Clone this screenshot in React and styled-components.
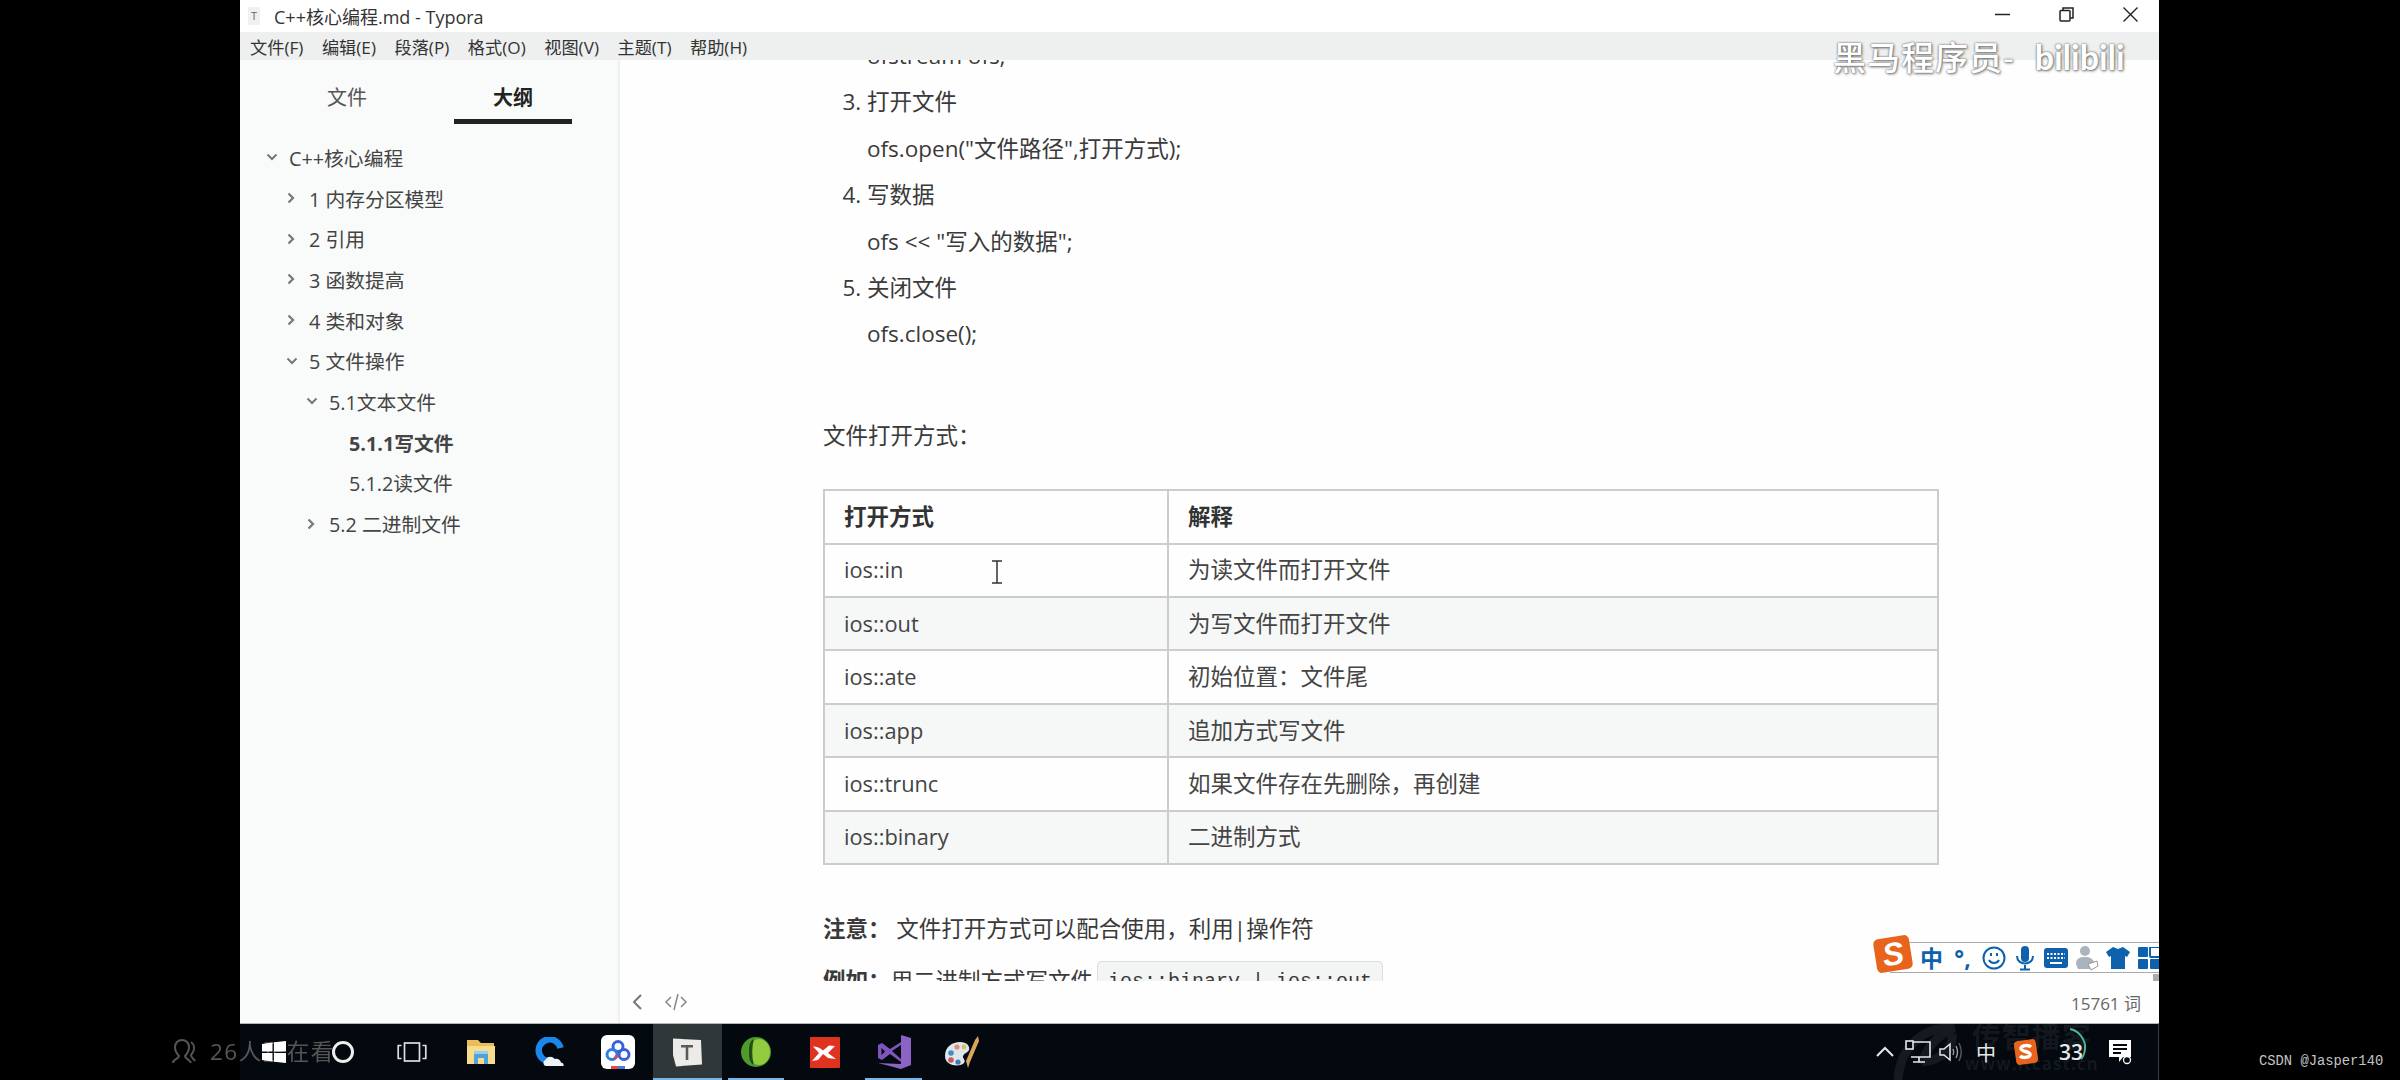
import React from 'react';
import styled, { createGlobalStyle } from 'styled-components';

const GlobalStyle = createGlobalStyle`
  html, body { margin: 0; padding: 0; background: #000; }
  body { font-family: "Open Sans", "Noto Sans CJK SC", sans-serif; color: #333; }
`;

const Page = styled.div`
  position: relative;
  width: 2400px;
  height: 1080px;
  overflow: hidden;
  background: #000;
  padding-left: 240px;
  box-sizing: border-box;
`;

const Window = styled.div`
  position: relative;
  width: 1919px;
  height: 1080px;
  display: flex;
  flex-direction: column;
  background: #fff;
  filter: blur(0.45px);
`;

/* title + menu */
const TitleBar = styled.div`
  height: 32px;
  flex: none;
  display: flex;
  align-items: center;
  padding-left: 8px;
  background: #fff;
`;

const AppGlyph = styled.span`
  width: 12px;
  height: 18px;
  background: #f0f0ee;
  color: #666;
  font-size: 11px;
  line-height: 18px;
  text-align: center;
  margin-right: 14px;
`;

const TitleText = styled.span`
  font-size: 18px;
  color: #333;
`;

const WinButtons = styled.div`
  margin-left: auto;
  display: flex;
  align-items: center;
  gap: 49px;
  padding: 0 21px 4px 0;
  color: #222;
`;

const MenuBar = styled.div`
  height: 28px;
  flex: none;
  display: flex;
  align-items: center;
  gap: 18.5px;
  padding-left: 10px;
  background: #eeefef;
  font-size: 17.2px;
  color: #333;
`;

/* main area */
const Body = styled.div`
  flex: 1;
  min-height: 0;
  display: flex;
`;

const Sidebar = styled.aside`
  width: 380px;
  flex: none;
  background: #f9fafa;
  border-right: 2px solid #f0f0f0;
  box-sizing: border-box;
`;

const Tabs = styled.div`
  display: flex;
  gap: 48px;
  padding-left: 48px;
  height: 64px;
`;

const Tab = styled.div`
  width: 118px;
  height: 64px;
  box-sizing: border-box;
  padding-top: 23px;
  text-align: center;
  font-size: 20px;
  line-height: 30px;
  font-weight: ${p => (p.$active ? 700 : 400)};
  color: ${p => (p.$active ? '#222' : '#555')};
  border-bottom: 5px solid ${p => (p.$active ? '#222' : 'transparent')};
`;

const Outline = styled.div`
  padding-top: 13px;
`;

const OutlineRow = styled.div`
  height: 40.7px;
  display: flex;
  align-items: center;
  padding-left: ${p => 26 + p.$level * 20}px;
  font-size: 19.8px;
  color: #444;
  font-weight: ${p => (p.$bold ? 700 : 400)};
  white-space: pre;
`;

const Arrow = styled.span`
  width: 23px;
  display: flex;
  color: #777;
`;

const Main = styled.main`
  flex: 1;
  min-width: 0;
  display: flex;
  flex-direction: column;
  background: #fefefe;
`;

const Scroller = styled.div`
  flex: 1;
  min-height: 0;
  overflow: hidden;
`;

const Article = styled.article`
  margin-top: -27px;
  padding-left: 203px;
  font-size: 22.5px;
  line-height: 46.4px;
  color: #3a3a3a;
`;

const CodeLine = styled.div`
  padding-left: 44px;
`;

const Steps = styled.ol`
  margin: 0;
  padding-left: 44px;
`;

const Para = styled.p`
  margin: ${p => p.$top}px 0 0;
`;

const Table = styled.table`
  width: 1116px;
  margin-top: 30px;
  border-collapse: collapse;
  table-layout: fixed;
  line-height: 30px;
`;

const Row = styled.tr`
  height: 53.4px;
  background: ${p => (p.$alt ? '#f6f7f7' : '#fefefe')};
`;

const HeadCell = styled.th`
  box-sizing: border-box;
  text-align: left;
  padding: 0 0 0 19px;
  border: 2px solid #ccc;
  font-weight: 700;
  color: #333;
  width: ${p => p.$w || 'auto'};
`;

const Cell = styled.td`
  padding: 0 0 0 19px;
  border: 2px solid #ccc;
  color: #444;
`;

const ModeCell = styled(Cell)`
  font-size: 21.8px;
`;

const Code = styled.code`
  display: inline-block;
  margin-left: 4px;
  padding: 0 10px;
  height: 40px;
  line-height: 40px;
  border: 1px solid #ddd;
  border-radius: 4px;
  background: #f3f4f4;
  font-family: "Liberation Mono", monospace;
  font-size: 20px;
  vertical-align: top;
  margin-top: 3px;
`;

const StatusBar = styled.div`
  height: 42px;
  flex: none;
  display: flex;
  align-items: center;
  gap: 20px;
  padding: 0 18px 0 10px;
  background: #fefefe;
  color: #777;
`;

const WordCount = styled.span`
  margin-left: auto;
  font-size: 17px;
  color: #666;
`;

/* taskbar */
const Taskbar = styled.div`
  position: relative;
  height: 57px;
  flex: none;
  display: flex;
  align-items: center;
  background: #03090e;
  border-top: 1px solid #b5b5b5;
  border-right: 1px solid #3a3f42;
  box-sizing: border-box;
`;

const TaskSlot = styled.div`
  position: relative;
  width: 68.8px;
  height: 56px;
  flex: none;
  display: flex;
  align-items: center;
  justify-content: center;
  background: ${p => (p.$active ? '#2f3739' : 'transparent')};
  &::after {
    content: '';
    display: ${p => (p.$running ? 'block' : 'none')};
    position: absolute;
    left: ${p => (p.$active ? 0 : 6)}px;
    right: ${p => (p.$active ? 0 : 6)}px;
    bottom: 0;
    height: 2px;
    background: #78b6ea;
  }
`;

const Tray = styled.div`
  position: relative;
  margin-left: auto;
  padding-right: 13px;
  display: flex;
  align-items: center;
  height: 56px;
  color: #e8e8e8;
`;

const TraySlot = styled.div`
  width: ${p => p.$w}px;
  display: flex;
  align-items: center;
  justify-content: center;
  font-size: ${p => p.$size || 20}px;
`;

const Battery = styled.div`
  position: relative;
  font-size: 21px;
  line-height: 26px;
  font-weight: 600;
`;

const BatteryArc = styled.svg`
  position: absolute;
  left: 9px;
  top: -12px;
`;

/* things lying over the window */
const BrandMark = styled.div`
  position: absolute;
  left: 1593px;
  top: 36px;
  display: flex;
  align-items: center;
  gap: 20px;
  color: #fff;
  text-shadow: 0 0 2px #555, 1px 1px 3px #777;
  pointer-events: none;
`;

const BrandText = styled.span`
  font-size: 33px;
  line-height: 44px;
  font-weight: 500;
  letter-spacing: 1px;
  white-space: nowrap;
`;

const BrandBili = styled.span`
  font-size: 34px;
  line-height: 44px;
  font-family: "Lato", sans-serif;
  font-weight: 700;
  margin-top: -2px;
`;

const TextCursor = styled.svg`
  position: absolute;
  left: 750px;
  top: 560px;
`;

const ImeBar = styled.div`
  position: absolute;
  left: 1650px;
  top: 942px;
  width: 269px;
  height: 31px;
  box-sizing: border-box;
  display: flex;
  align-items: center;
  padding-left: 26px;
  overflow: hidden;
  background: #fff;
  border-top: 1px solid #aaa;
  border-bottom: 1px solid #aaa;
  color: #0e62ad;
`;

const ImeSlot = styled.span`
  width: 31px;
  flex: none;
  display: flex;
  align-items: center;
  justify-content: center;
  font-size: 23px;
  font-weight: 700;
  line-height: 28px;
`;

const ImeLogo = styled.div`
  position: absolute;
  left: 1635px;
  top: 937px;
  width: 36px;
  height: 34px;
  border-radius: 5px;
  transform: rotate(-9deg);
  background: #e8641c;
  color: #fff;
  font: italic 900 32px/34px "Liberation Sans", sans-serif;
  text-align: center;
`;

const ImeScrollThumb = styled.div`
  position: absolute;
  left: 1913px;
  top: 974px;
  width: 6px;
  height: 7px;
  background: #aaa;
`;

const ItcastMark = styled.div`
  position: absolute;
  left: 1725px;
  bottom: 8px;
  color: rgba(255, 255, 255, 0.07);
  font-weight: 700;
  line-height: 1;
  text-align: center;
  pointer-events: none;
`;

const ItcastName = styled.div`
  font-size: 29px;
  letter-spacing: 1px;
`;

const ItcastUrl = styled.div`
  font-size: 17px;
  margin-top: 4px;
  letter-spacing: 1px;
`;

const ItcastSwirl = styled.svg`
  position: absolute;
  left: 1652px;
  top: 0;
`;

const Viewers = styled.div`
  position: absolute;
  left: -69px;
  top: 12px;
  display: flex;
  align-items: center;
  gap: 13px;
  color: #565656;
  font-size: 22.5px;
  line-height: 32px;
  letter-spacing: 1.5px;
  white-space: nowrap;
`;

const Credit = styled.div`
  position: absolute;
  left: 2259px;
  top: 1053px;
  font-family: "Liberation Mono", monospace;
  font-size: 13.8px;
  line-height: 18px;
  color: #c4c4c4;
`;

const ChevronRight = () => (
  <svg width="10" height="12" viewBox="0 0 10 12"><path d="M2.5 1.5 7 6l-4.5 4.5" fill="none" stroke="currentColor" strokeWidth="2.2" /></svg>
);
const ChevronDown = () => (
  <svg width="12" height="10" viewBox="0 0 12 10"><path d="M1.5 2.5 6 7l4.5-4.5" fill="none" stroke="currentColor" strokeWidth="2" /></svg>
);

const outline = [
  { level: 0, open: true, text: 'C++核心编程' },
  { level: 1, text: '1 内存分区模型' },
  { level: 1, text: '2 引用' },
  { level: 1, text: '3 函数提高' },
  { level: 1, text: '4 类和对象' },
  { level: 1, open: true, text: '5 文件操作' },
  { level: 2, open: true, text: '5.1文本文件' },
  { level: 3, leaf: true, bold: true, text: '5.1.1写文件' },
  { level: 3, leaf: true, text: '5.1.2读文件' },
  { level: 2, text: '5.2 二进制文件' },
];

const modes = [
  ['ios::in', '为读文件而打开文件'],
  ['ios::out', '为写文件而打开文件'],
  ['ios::ate', '初始位置：文件尾'],
  ['ios::app', '追加方式写文件'],
  ['ios::trunc', '如果文件存在先删除，再创建'],
  ['ios::binary', '二进制方式'],
];

const StartIcon = () => (
  <svg width="24" height="22" viewBox="0 0 24 22" fill="#fff"><path d="M0 3 10.5 1.5v9H0zM12 1.200 24 0v10.5H12zM0 12h10.5v8.5L0 19zM12 12h12v10l-12-1.300z" /></svg>
);
const CortanaIcon = () => (
  <svg width="24" height="24" viewBox="0 0 24 24"><circle cx="12" cy="12" r="9.5" fill="none" stroke="#eee" strokeWidth="3" /></svg>
);
const TaskViewIcon = () => (
  <svg width="30" height="20" viewBox="0 0 30 20" fill="none" stroke="#ddd" strokeWidth="1.7"><rect x="7.5" y="1" width="15" height="18" /><path d="M4.5 3.5H1.200v13h3.300M25.5 3.5h3.300v13h-3.300" /></svg>
);
const FolderIcon = () => (
  <svg width="30" height="26" viewBox="0 0 30 26"><path d="M1 1h11l3 3h13v6H1z" fill="#e9bd5c" /><path d="M1 7h28v18H1z" fill="#f8dc8c" /><path d="M8 14h14v11H8z" fill="#4fa3da" /><path d="M12 19h6v6h-6z" fill="#f8dc8c" /><path d="M8 12h14v3H8z" fill="#8fd0f2" /></svg>
);
const QuarkIcon = () => (
  <svg width="34" height="30" viewBox="0 0 34 30"><path d="M21 23.5A11 11 0 1 1 27.5 11" fill="none" stroke="#1c86ea" strokeWidth="6.5" /><path d="M13 29c-3-.5-3.5-5-.5-6 1.500-4 7-4 9-1 3-1 6 1 6.5 3.5 2 .3 3 1.500 2.5 3.5z" fill="#eef3f9" /></svg>
);
const BaiduIcon = () => (
  <svg width="34" height="34" viewBox="0 0 34 34"><rect width="34" height="34" rx="6" fill="#fff" /><g fill="none" strokeWidth="3"><circle cx="17" cy="11.5" r="5" stroke="#3a62d8" /><circle cx="11" cy="19.5" r="5" stroke="#2c7fe6" /><circle cx="23" cy="19.5" r="5" stroke="#3a62d8" /><path d="M13.5 23.5 17 20" stroke="#d04a6a" /></g><rect x="10" y="31" width="7" height="3" fill="#e44" /><rect x="17" y="31" width="7" height="3" fill="#4a7be0" /></svg>
);
const TyporaIcon = () => (
  <svg width="32" height="30" viewBox="0 0 32 30"><path d="M2 1.500 30 3l1 24.5-26 2L2 18z" fill="#ecebe8" /><path d="M10 8h12v2.5h-4.700V23h-2.600V10.5H10z" fill="#5a5a5a" /></svg>
);
const LeafIcon = () => (
  <svg width="30" height="30" viewBox="0 0 30 30"><ellipse cx="15" cy="15" rx="15" ry="15" fill="#4f9a2a" /><ellipse cx="18" cy="15" rx="11" ry="13" fill="#92cc3e" /><path d="M12 3C7 9 7 21 12 27 10 21 10 9 12 3z" fill="#1f4f16" stroke="#1f4f16" strokeWidth="1.5" /></svg>
);
const XMindIcon = () => (
  <svg width="30" height="31" viewBox="0 0 30 31"><rect width="30" height="31" rx="1" fill="#e0331f" /><path d="M3 9.5c4 0 7 1.500 10 4l6-5 6 .5-7 7 8 6-8-1-5-4-5 6-6 1 7-8z" fill="#fff" /></svg>
);
const StudioIcon = () => (
  <svg width="34" height="34" viewBox="0 0 34 34"><path d="M24 0l10 3v27l-10 4L1 28l23 1z" fill="#8a63c4" /><path d="M24 7v17l-9-8.5z" fill="#03090e" /><path d="M1 10l4-2 8 6 11-7v3l-9 6 9 8v3L13 19l-8 6-4-2zM4.5 13v7l3.5-3.5z" fill="#7f55ba" /></svg>
);
const PaletteIcon = () => (
  <svg width="36" height="34" viewBox="0 0 36 34"><path d="M1 21C1 12 8 7 16 7c7 0 10 4 9 8-1 3-6 3-6 7 0 2 3 3 1 6-3 4-19 4-19-7z" fill="#dfe5ea" /><circle cx="7" cy="18" r="2.8" fill="#3d8fc9" /><circle cx="13" cy="12" r="2.6" fill="#d98f78" /><circle cx="7" cy="25" r="2.8" fill="#c65a5a" /><circle cx="14" cy="27" r="2.6" fill="#3e78b8" /><circle cx="20" cy="12" r="2.4" fill="#d6c25a" /><path d="M22 26 31 5l3-4 1 5-9 21-2 6z" fill="#d9a65c" /></svg>
);

const ChevronUp = () => (
  <svg width="20" height="12" viewBox="0 0 20 12"><path d="M2 10l8-8 8 8" fill="none" stroke="#e8e8e8" strokeWidth="2" /></svg>
);
const NetworkIcon = () => (
  <svg width="26" height="24" viewBox="0 0 26 24" fill="none" stroke="#e8e8e8" strokeWidth="1.6"><path d="M6 2h19v15H6M14 17v5M8 22h12" /><rect x="1" y="1" width="7" height="8" fill="#03090e" /></svg>
);
const SpeakerIcon = () => (
  <svg width="26" height="24" viewBox="0 0 26 24" fill="none" stroke="#e8e8e8" strokeWidth="1.5"><path d="M2 9v6h4l6 5V4L6 9z" /><path d="M15 9c1 2 1 4 0 6M18 6c2 4 2 8 0 12" stroke="#999" /><path d="M21 3c3 6 3 12 0 18" stroke="#555" /></svg>
);
const NotifyIcon = () => (
  <svg width="24" height="26" viewBox="0 0 24 26"><path d="M1 1h22v17h-8l-4 5v-5H1z" fill="#fff" /><path d="M5 6h14M5 10h14M5 14h8" stroke="#03090e" strokeWidth="1.8" /><circle cx="19" cy="21" r="3.5" fill="#03090e" stroke="#fff" strokeWidth="1.3" /></svg>
);
const TraySogou = () => (
  <svg width="24" height="26" viewBox="0 0 24 26"><rect x="1" y="1" width="22" height="24" rx="4" fill="#e8641c" transform="rotate(-8 12 13)" /><path d="M17 8c-2-2-9-2-10 1-1 4 10 3 9 7-1 3-8 3-10 1" fill="none" stroke="#fff" strokeWidth="3.5" /></svg>
);

const Smile = () => (
  <svg width="24" height="24" viewBox="0 0 24 24" fill="none" stroke="currentColor" strokeWidth="2"><circle cx="12" cy="12" r="10.5" /><path d="M7 14c2 4 8 4 10 0" /><path d="M9 7v3M15 7v3" /></svg>
);
const Mic = () => (
  <svg width="20" height="26" viewBox="0 0 20 26" fill="currentColor"><rect x="6" y="1" width="8" height="16" rx="4" /><path d="M2 11c0 10 16 10 16 0" fill="none" stroke="currentColor" strokeWidth="2" /><path d="M10 20v4M5 24.5h10" stroke="currentColor" strokeWidth="2" /></svg>
);
const Keyboard = () => (
  <svg width="24" height="20" viewBox="0 0 24 20"><rect width="24" height="20" rx="3" fill="currentColor" /><path d="M3 6h18M3 10h18" stroke="#fff" strokeWidth="2" strokeDasharray="2 1.5" /><path d="M6 15h12" stroke="#fff" strokeWidth="2" /></svg>
);
const Person = () => (
  <svg width="24" height="26" viewBox="0 0 24 26"><circle cx="10" cy="6" r="5" fill="#aab4bf" /><path d="M1 19c0-6 4-7 9-7s8 2 9 5l-4 7H3z" fill="#aab4bf" /><path d="M13 19l9-3 1 5-7 4z" fill="#fff" stroke="#999" /></svg>
);
const Shirt = () => (
  <svg width="24" height="24" viewBox="0 0 24 24" fill="currentColor"><path d="M7 1l5 2 5-2 7 5-3 5-2-1v13H5V10l-2 1-3-5z" /></svg>
);
const Grid = () => (
  <svg width="22" height="22" viewBox="0 0 22 22"><rect width="10" height="10" rx="1" fill="currentColor" /><rect x="12" width="10" height="10" rx="1" fill="none" stroke="currentColor" strokeWidth="2" /><rect y="12" width="10" height="10" rx="1" fill="currentColor" /><rect x="12" y="12" width="10" height="10" rx="1" fill="currentColor" /></svg>
);

export default function App() {
  return (
    <Page>
      <GlobalStyle />
      <Window>
        <TitleBar>
          <AppGlyph>T</AppGlyph>
          <TitleText>C++核心编程.md - Typora</TitleText>
          <WinButtons>
            <svg width="15" height="15" viewBox="0 0 15 15"><path d="M0 7.5h15" stroke="currentColor" strokeWidth="1.5" /></svg>
            <svg width="15" height="15" viewBox="0 0 15 15" fill="none" stroke="currentColor" strokeWidth="1.5"><rect x="1" y="3.5" width="10" height="10.5" rx="1" /><path d="M4 3.5V1h10v10h-3" /></svg>
            <svg width="15" height="15" viewBox="0 0 15 15"><path d="M.5.5l14 14M14.5.5l-14 14" stroke="currentColor" strokeWidth="1.4" /></svg>
          </WinButtons>
        </TitleBar>
        <MenuBar>
          <span>文件(F)</span>
          <span>编辑(E)</span>
          <span>段落(P)</span>
          <span>格式(O)</span>
          <span>视图(V)</span>
          <span>主题(T)</span>
          <span>帮助(H)</span>
        </MenuBar>
        <Body>
          <Sidebar>
            <Tabs>
              <Tab>文件</Tab>
              <Tab $active>大纲</Tab>
            </Tabs>
            <Outline>
              {outline.map(item => (
                <OutlineRow key={item.text} $level={item.level} $bold={item.bold}>
                  <Arrow>{item.leaf ? null : item.open ? <ChevronDown /> : <ChevronRight />}</Arrow>
                  {item.text}
                </OutlineRow>
              ))}
            </Outline>
          </Sidebar>
          <Main>
            <Scroller>
              <Article>
                <CodeLine>ofstream ofs;</CodeLine>
                <Steps start={3}>
                  <li>打开文件<br />ofs.open("文件路径",打开方式);</li>
                  <li>写数据<br />ofs &lt;&lt; "写入的数据";</li>
                  <li>关闭文件<br />ofs.close();</li>
                </Steps>
                <Para $top={55}>文件打开方式：</Para>
                <Table>
                  <thead>
                    <Row>
                      <HeadCell $w="344px">打开方式</HeadCell>
                      <HeadCell>解释</HeadCell>
                    </Row>
                  </thead>
                  <tbody>
                    {modes.map((m, i) => (
                      <Row key={m[0]} $alt={i % 2 === 1}>
                        <ModeCell>{m[0]}</ModeCell>
                        <Cell>{m[1]}</Cell>
                      </Row>
                    ))}
                  </tbody>
                </Table>
                <Para $top={41}><b>注意：</b> 文件打开方式可以配合使用，利用|操作符</Para>
                <Para $top={6}><b>例如：</b>用二进制方式写文件<Code>ios::binary | ios::out</Code></Para>
              </Article>
            </Scroller>
            <StatusBar>
              <svg width="14" height="20" viewBox="0 0 14 20"><path d="M11 3 4 10l7 7" fill="none" stroke="currentColor" strokeWidth="2" /></svg>
              <svg width="24" height="20" viewBox="0 0 24 20" fill="none" stroke="#888" strokeWidth="1.5"><path d="M7 5l-5 5 5 5M17 5l5 5-5 5M14 2l-4 16" /></svg>
              <WordCount>15761 词</WordCount>
            </StatusBar>
          </Main>
        </Body>
        <Taskbar>
          <Viewers>
            <svg width="26" height="26" viewBox="0 0 26 26" fill="none" stroke="currentColor" strokeWidth="2"><path d="M2 24c0-4 6-4 6-7-3-3-4-6-4-9 0-4 3-7 7-7s7 3 7 7c0 3-1 6-4 9 0 3 5 3 6 7" /><path d="M20 3c3 2 4 6 2 10l-2 3c0 3 3 4 4 6" /></svg>
            <span>26人正在看</span>
          </Viewers>
          <ItcastSwirl width="70" height="56" viewBox="0 0 70 56" fill="none" stroke="rgba(255,255,255,0.07)" strokeWidth="9"><path d="M6 56C8 24 30 2 62 4 44 12 34 24 30 40M60 10c2 16-12 26-30 28" /></ItcastSwirl>
          <ItcastMark>
            <ItcastName>传智播客</ItcastName>
            <ItcastUrl>www.itcast.cn</ItcastUrl>
          </ItcastMark>
          <TaskSlot><StartIcon /></TaskSlot>
          <TaskSlot><CortanaIcon /></TaskSlot>
          <TaskSlot><TaskViewIcon /></TaskSlot>
          <TaskSlot><FolderIcon /></TaskSlot>
          <TaskSlot><QuarkIcon /></TaskSlot>
          <TaskSlot><BaiduIcon /></TaskSlot>
          <TaskSlot $active $running><TyporaIcon /></TaskSlot>
          <TaskSlot $running><LeafIcon /></TaskSlot>
          <TaskSlot><XMindIcon /></TaskSlot>
          <TaskSlot $running><StudioIcon /></TaskSlot>
          <TaskSlot><PaletteIcon /></TaskSlot>
          <Tray>
            <TraySlot $w={33}><ChevronUp /></TraySlot>
            <TraySlot $w={33}><NetworkIcon /></TraySlot>
            <TraySlot $w={33}><SpeakerIcon /></TraySlot>
            <TraySlot $w={38} $size={20}>中</TraySlot>
            <TraySlot $w={42}><TraySogou /></TraySlot>
            <TraySlot $w={48}>
              <Battery>
                33
                <BatteryArc width="24" height="36" viewBox="0 0 24 36" fill="none" stroke="#4fb39a" strokeWidth="2"><path d="M2 2c10 2 16 12 15 20-.4 4-2 8-4 10" /></BatteryArc>
              </Battery>
            </TraySlot>
            <TraySlot $w={50}><NotifyIcon /></TraySlot>
          </Tray>
        </Taskbar>
        <BrandMark>
          <BrandText>黑马程序员-</BrandText>
          <BrandBili>bilibili</BrandBili>
        </BrandMark>
        <TextCursor width="14" height="24" viewBox="0 0 14 24"><path d="M2 1h10M7 1v22M2 23h10" stroke="#333" strokeWidth="1.5" fill="none" /></TextCursor>
        <ImeBar>
          <ImeSlot>中</ImeSlot>
          <ImeSlot>°,</ImeSlot>
          <ImeSlot><Smile /></ImeSlot>
          <ImeSlot><Mic /></ImeSlot>
          <ImeSlot><Keyboard /></ImeSlot>
          <ImeSlot><Person /></ImeSlot>
          <ImeSlot><Shirt /></ImeSlot>
          <ImeSlot><Grid /></ImeSlot>
        </ImeBar>
        <ImeLogo>S</ImeLogo>
        <ImeScrollThumb />
      </Window>
      <Credit>CSDN @Jasper140</Credit>
    </Page>
  );
}
